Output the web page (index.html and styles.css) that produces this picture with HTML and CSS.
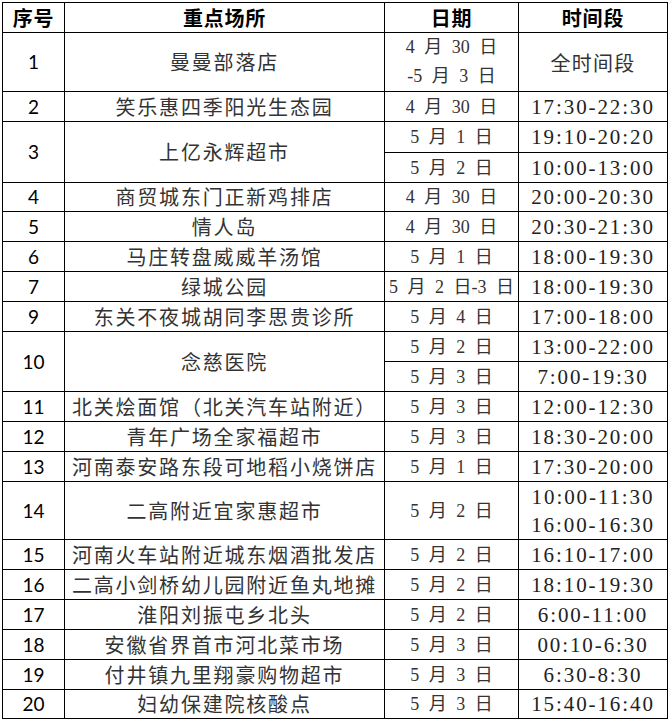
FILE: index.html
```html
<!DOCTYPE html>
<html lang="zh-CN">
<head>
<meta charset="utf-8">
<title>重点场所</title>
<link rel="stylesheet" href="styles.css">
</head>
<body>
<table class="sched">
  <colgroup>
    <col class="c-no">
    <col class="c-place">
    <col class="c-date">
    <col class="c-time">
  </colgroup>
  <thead>
    <tr class="r">
      <th>序号</th><th>重点场所</th><th>日期</th><th>时间段</th>
    </tr>
  </thead>
  <tbody>
    <tr class="r tall">
      <td class="no">1</td><td class="place">曼曼部落店</td>
      <td class="date two">4 月 30 日<br>-5 月 3 日</td><td class="allday">全时间段</td>
    </tr>
    <tr class="r"><td class="no">2</td><td class="place">笑乐惠四季阳光生态园</td><td class="date">4 月 30 日</td><td class="time">17:30-22:30</td></tr>
    <tr class="r r31"><td class="no" rowspan="2">3</td><td class="place" rowspan="2">上亿永辉超市</td><td class="date">5 月 1 日</td><td class="time">19:10-20:20</td></tr>
    <tr class="r"><td class="date">5 月 2 日</td><td class="time">10:00-13:00</td></tr>
    <tr class="r r29"><td class="no">4</td><td class="place">商贸城东门正新鸡排店</td><td class="date">4 月 30 日</td><td class="time">20:00-20:30</td></tr>
    <tr class="r"><td class="no">5</td><td class="place">情人岛</td><td class="date">4 月 30 日</td><td class="time">20:30-21:30</td></tr>
    <tr class="r"><td class="no">6</td><td class="place">马庄转盘威威羊汤馆</td><td class="date">5 月 1 日</td><td class="time">18:00-19:30</td></tr>
    <tr class="r"><td class="no">7</td><td class="place">绿城公园</td><td class="date">5 月 2 日-3 日</td><td class="time">18:00-19:30</td></tr>
    <tr class="r"><td class="no">9</td><td class="place">东关不夜城胡同李思贵诊所</td><td class="date">5 月 4 日</td><td class="time">17:00-18:00</td></tr>
    <tr class="r"><td class="no" rowspan="2">10</td><td class="place" rowspan="2">念慈医院</td><td class="date">5 月 2 日</td><td class="time">13:00-22:00</td></tr>
    <tr class="r"><td class="date">5 月 3 日</td><td class="time">7:00-19:30</td></tr>
    <tr class="r"><td class="no">11</td><td class="place">北关烩面馆（北关汽车站附近）</td><td class="date">5 月 3 日</td><td class="time">12:00-12:30</td></tr>
    <tr class="r"><td class="no">12</td><td class="place">青年广场全家福超市</td><td class="date">5 月 3 日</td><td class="time">18:30-20:00</td></tr>
    <tr class="r"><td class="no">13</td><td class="place">河南泰安路东段可地稻小烧饼店</td><td class="date">5 月 1 日</td><td class="time">17:30-20:00</td></tr>
    <tr class="r tall2"><td class="no">14</td><td class="place">二高附近宜家惠超市</td><td class="date">5 月 2 日</td><td class="time two">10:00-11:30<br>16:00-16:30</td></tr>
    <tr class="r"><td class="no">15</td><td class="place">河南火车站附近城东烟酒批发店</td><td class="date">5 月 2 日</td><td class="time">16:10-17:00</td></tr>
    <tr class="r"><td class="no">16</td><td class="place">二高小剑桥幼儿园附近鱼丸地摊</td><td class="date">5 月 2 日</td><td class="time">18:10-19:30</td></tr>
    <tr class="r"><td class="no">17</td><td class="place">淮阳刘振屯乡北头</td><td class="date">5 月 2 日</td><td class="time">6:00-11:00</td></tr>
    <tr class="r"><td class="no">18</td><td class="place">安徽省界首市河北菜市场</td><td class="date">5 月 3 日</td><td class="time">00:10-6:30</td></tr>
    <tr class="r"><td class="no">19</td><td class="place">付井镇九里翔豪购物超市</td><td class="date">5 月 3 日</td><td class="time">6:30-8:30</td></tr>
    <tr class="r r29"><td class="no">20</td><td class="place">妇幼保建院核酸点</td><td class="date">5 月 3 日</td><td class="time">15:40-16:40</td></tr>
  </tbody>
</table>
</body>
</html>
```
FILE: styles.css
```css
html, body {
  margin: 0;
  padding: 0;
  background: #fff;
}
body {
  padding: 2px 0 0 2px;
  font-family: "Noto Sans CJK SC", sans-serif;
  color: #2a2a2a;
}
.sched {
  border-collapse: collapse;
  table-layout: fixed;
  width: 666px;
}
.c-no { width: 62px; }
.c-place { width: 320px; }
.c-date { width: 134px; }
.c-time { width: 149px; }

.sched th,
.sched td {
  border: 1px solid #000;
  padding: 0;
  text-align: center;
  vertical-align: middle;
  white-space: nowrap;
  overflow: visible;
}
.r { height: 30px; }
.r.r29 { height: 29px; }
.r.r31 { height: 31px; }
.r.tall { height: 59px; }
.r.tall2 { height: 58px; }

.sched th {
  font-family: "Noto Sans CJK SC", sans-serif;
  font-weight: 700;
  font-size: 20px;
  letter-spacing: 0.8px;
  line-height: 26px;
  color: #000;
}
.no {
  font-family: Lato, "Open Sans", sans-serif;
  font-size: 19px;
  color: #000;
  line-height: 26px;
}
.place {
  font-size: 20px;
  letter-spacing: 1.8px;
  line-height: 26px;
  font-weight: 400;
  color: #333;
}
.date {
  font-family: "Liberation Serif", "Noto Sans CJK SC", serif;
  font-size: 18px;
  word-spacing: 5px;
  line-height: 26px;
  color: #333;
}
.date.two { line-height: 29px; }
.time {
  font-family: "Liberation Serif", serif;
  font-size: 21px;
  letter-spacing: 1.9px;
  line-height: 26px;
  color: #222;
}
.time.two { line-height: 28px; }
.allday {
  font-size: 20px;
  letter-spacing: 1.3px;
  color: #333;
}
```
